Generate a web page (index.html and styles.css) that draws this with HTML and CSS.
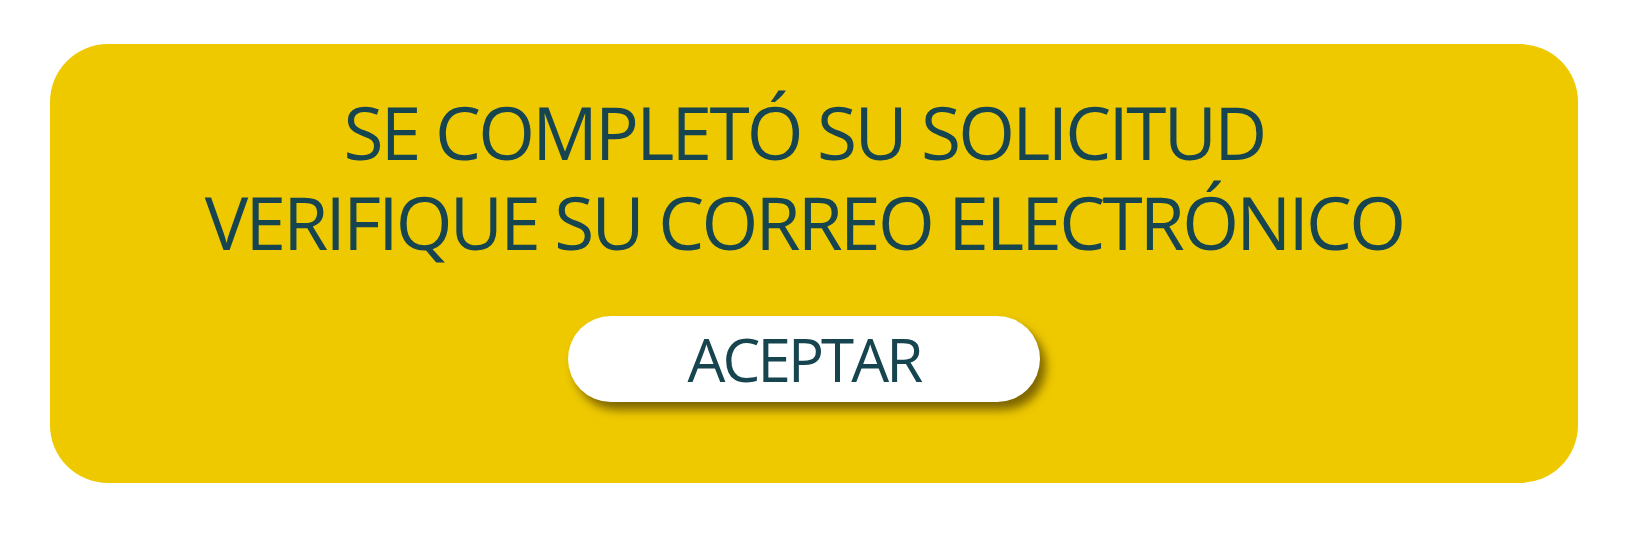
FILE: index.html
```html
<!DOCTYPE html>
<html lang="es">
<head>
<meta charset="utf-8">
<title>Solicitud completada</title>
<link rel="stylesheet" href="styles.css">
</head>
<body>
<div class="page">
  <div class="card">
    <h1 class="message">
      <span class="line">SE COMPLETÓ SU SOLICITUD</span>
      <span class="line">VERIFIQUE SU CORREO ELECTRÓNICO</span>
    </h1>
    <button class="accept" type="button">ACEPTAR</button>
  </div>
</div>
</body>
</html>
```
FILE: styles.css
```css
html, body {
  margin: 0;
  padding: 0;
  background: #ffffff;
}
.page {
  width: 1629px;
  height: 556px;
  padding-top: 44px;
  padding-left: 50px;
  box-sizing: border-box;
}
.card {
  width: 1528px;
  height: 439px;
  background: #eec900;
  border-radius: 58px;
  box-sizing: border-box;
  padding-right: 20px;
  padding-top: 43px;
  display: flex;
  flex-direction: column;
  align-items: center;
}
.message {
  margin: 0;
  font-family: "Open Sans", sans-serif;
  font-weight: 400;
  font-size: 73px;
  line-height: 90px;
  color: #16444f;
  text-align: center;
  letter-spacing: -2.75px;
  display: flex;
  flex-direction: column;
  align-items: center;
}
.line {
  display: block;
  white-space: nowrap;
}
.accept {
  margin-top: 49px;
  width: 472px;
  height: 86px;
  border: none;
  border-radius: 43px;
  background: #ffffff;
  color: #16444f;
  font-family: "Open Sans", sans-serif;
  font-size: 60px;
  letter-spacing: -2.9px;
  line-height: 86px;
  padding: 0;
  box-shadow: 6px 8px 10px rgba(90, 70, 0, 0.75);
}
```
